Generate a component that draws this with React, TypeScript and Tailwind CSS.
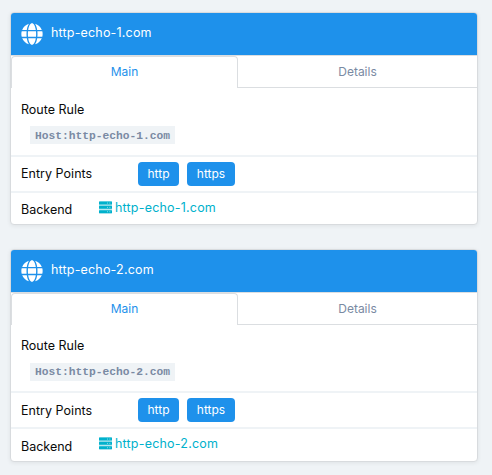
import { FaGlobe } from 'react-icons/fa';

type Route = {
  host: string;
  rule: string;
  code: string;
  entry: string;
  backend: string;
  backendLabel: string;
};

const routes: Route[] = [
  {
    host: 'http-echo-1.com',
    rule: 'h-[67px] pt-[13px]',
    code: 'mt-[8px] pt-[2px]',
    entry: 'mt-[3px]',
    backend: 'h-[33px]',
    backendLabel: 'mt-[2px]',
  },
  {
    host: 'http-echo-2.com',
    rule: 'h-[66px] pt-[12px]',
    code: 'mt-[9px] pt-px',
    entry: 'mt-[4px]',
    backend: 'h-[34px]',
    backendLabel: 'mt-[3px]',
  },
];

function ServerIcon() {
  return (
    <svg viewBox="0 0 13 13" className="h-[13px] w-[13px]" aria-hidden="true">
      <rect width="13" height="12.5" rx="0.8" fill="#b8e8f0" />
      <g fill="#00b1cc">
        <rect y="0.6" width="13" height="3" rx="0.5" />
        <rect y="4.8" width="13" height="3" rx="0.5" />
        <rect y="9.2" width="13" height="3" rx="0.5" />
      </g>
      <g fill="#a5e2ec">
        <rect x="8" y="1.6" width="0.9" height="0.9" />
        <rect x="10.4" y="1.6" width="0.9" height="0.9" />
        <rect x="8" y="5.9" width="0.9" height="0.9" />
        <rect x="10.4" y="5.9" width="0.9" height="0.9" />
        <rect x="8" y="10.3" width="0.9" height="0.9" />
        <rect x="10.4" y="10.3" width="0.9" height="0.9" />
      </g>
    </svg>
  );
}

function Card({ host, rule, code, entry, backend, backendLabel }: Route) {
  return (
    <section className="flex flex-col overflow-hidden rounded border border-[#d8dbde] bg-white shadow-[0_1px_4px_rgba(0,0,0,0.07)]">
      <header className="flex h-[42px] items-center bg-[#1e91eb] pl-[10px] text-white">
        <FaGlobe className="h-[22px] w-[22px] shrink-0" />
        <span className="ml-2 pb-[2px] tracking-[0.18px]">{host}</span>
      </header>
      <nav className="flex h-[33px] border-t border-[#dbdee1] text-[12px]">
        <div className="flex w-[227px] items-center justify-center rounded-t border border-b-0 border-[#dbdee1] pb-[2px] text-[#1e91eb]">
          Main
        </div>
        <div className="flex grow items-center justify-center border-b border-[#dbdee1] text-[#7a8aa3]">
          Details
        </div>
      </nav>
      <div className={`${rule} flex flex-col items-start pl-[10px]`}>
        <span className="leading-[17px]">Route Rule</span>
        <code
          className={`${code} ml-[9px] flex h-[18px] w-[145px] items-center bg-[#eff3f6] pl-[5px] font-['Liberation_Mono',monospace] text-[11.25px] font-bold text-[#7a8aa3]`}
        >
          {'Host:' + host}
        </code>
      </div>
      <div className="flex h-[36px] items-start border-t-2 border-[#eff3f6] pl-[10px] pt-[5px]">
        <span className={`${entry} w-[117px] leading-[17px] tracking-[0.03px]`}>Entry Points</span>
        <span className="flex h-6 w-[41px] items-center justify-center rounded bg-[#1e91eb] text-[12px] text-white">http</span>
        <span className="ml-2 flex h-6 w-[48px] items-center justify-center rounded bg-[#1e91eb] text-[12px] text-white">https</span>
      </div>
      <div className={`${backend} flex items-start border-t-2 border-[#eff3f6] pl-[10px] pt-[6px]`}>
        <span className={`${backendLabel} w-[78px] leading-[17px]`}>Backend</span>
        <a className="flex items-center text-[#00b1cc]">
          <ServerIcon />
          <span className="ml-[3px] leading-[17px] tracking-[0.2px]">{host}</span>
        </a>
      </div>
    </section>
  );
}

export default function App() {
  return (
    <main className="flex h-[475px] w-[492px] flex-col gap-6 overflow-hidden bg-[#eff3f6] pl-[10px] pr-[14px] pt-3 font-['Inter',sans-serif] text-[12.5px] text-[#0a0a0a]">
      {routes.map((route) => (
        <Card key={route.host} {...route} />
      ))}
    </main>
  );
}
